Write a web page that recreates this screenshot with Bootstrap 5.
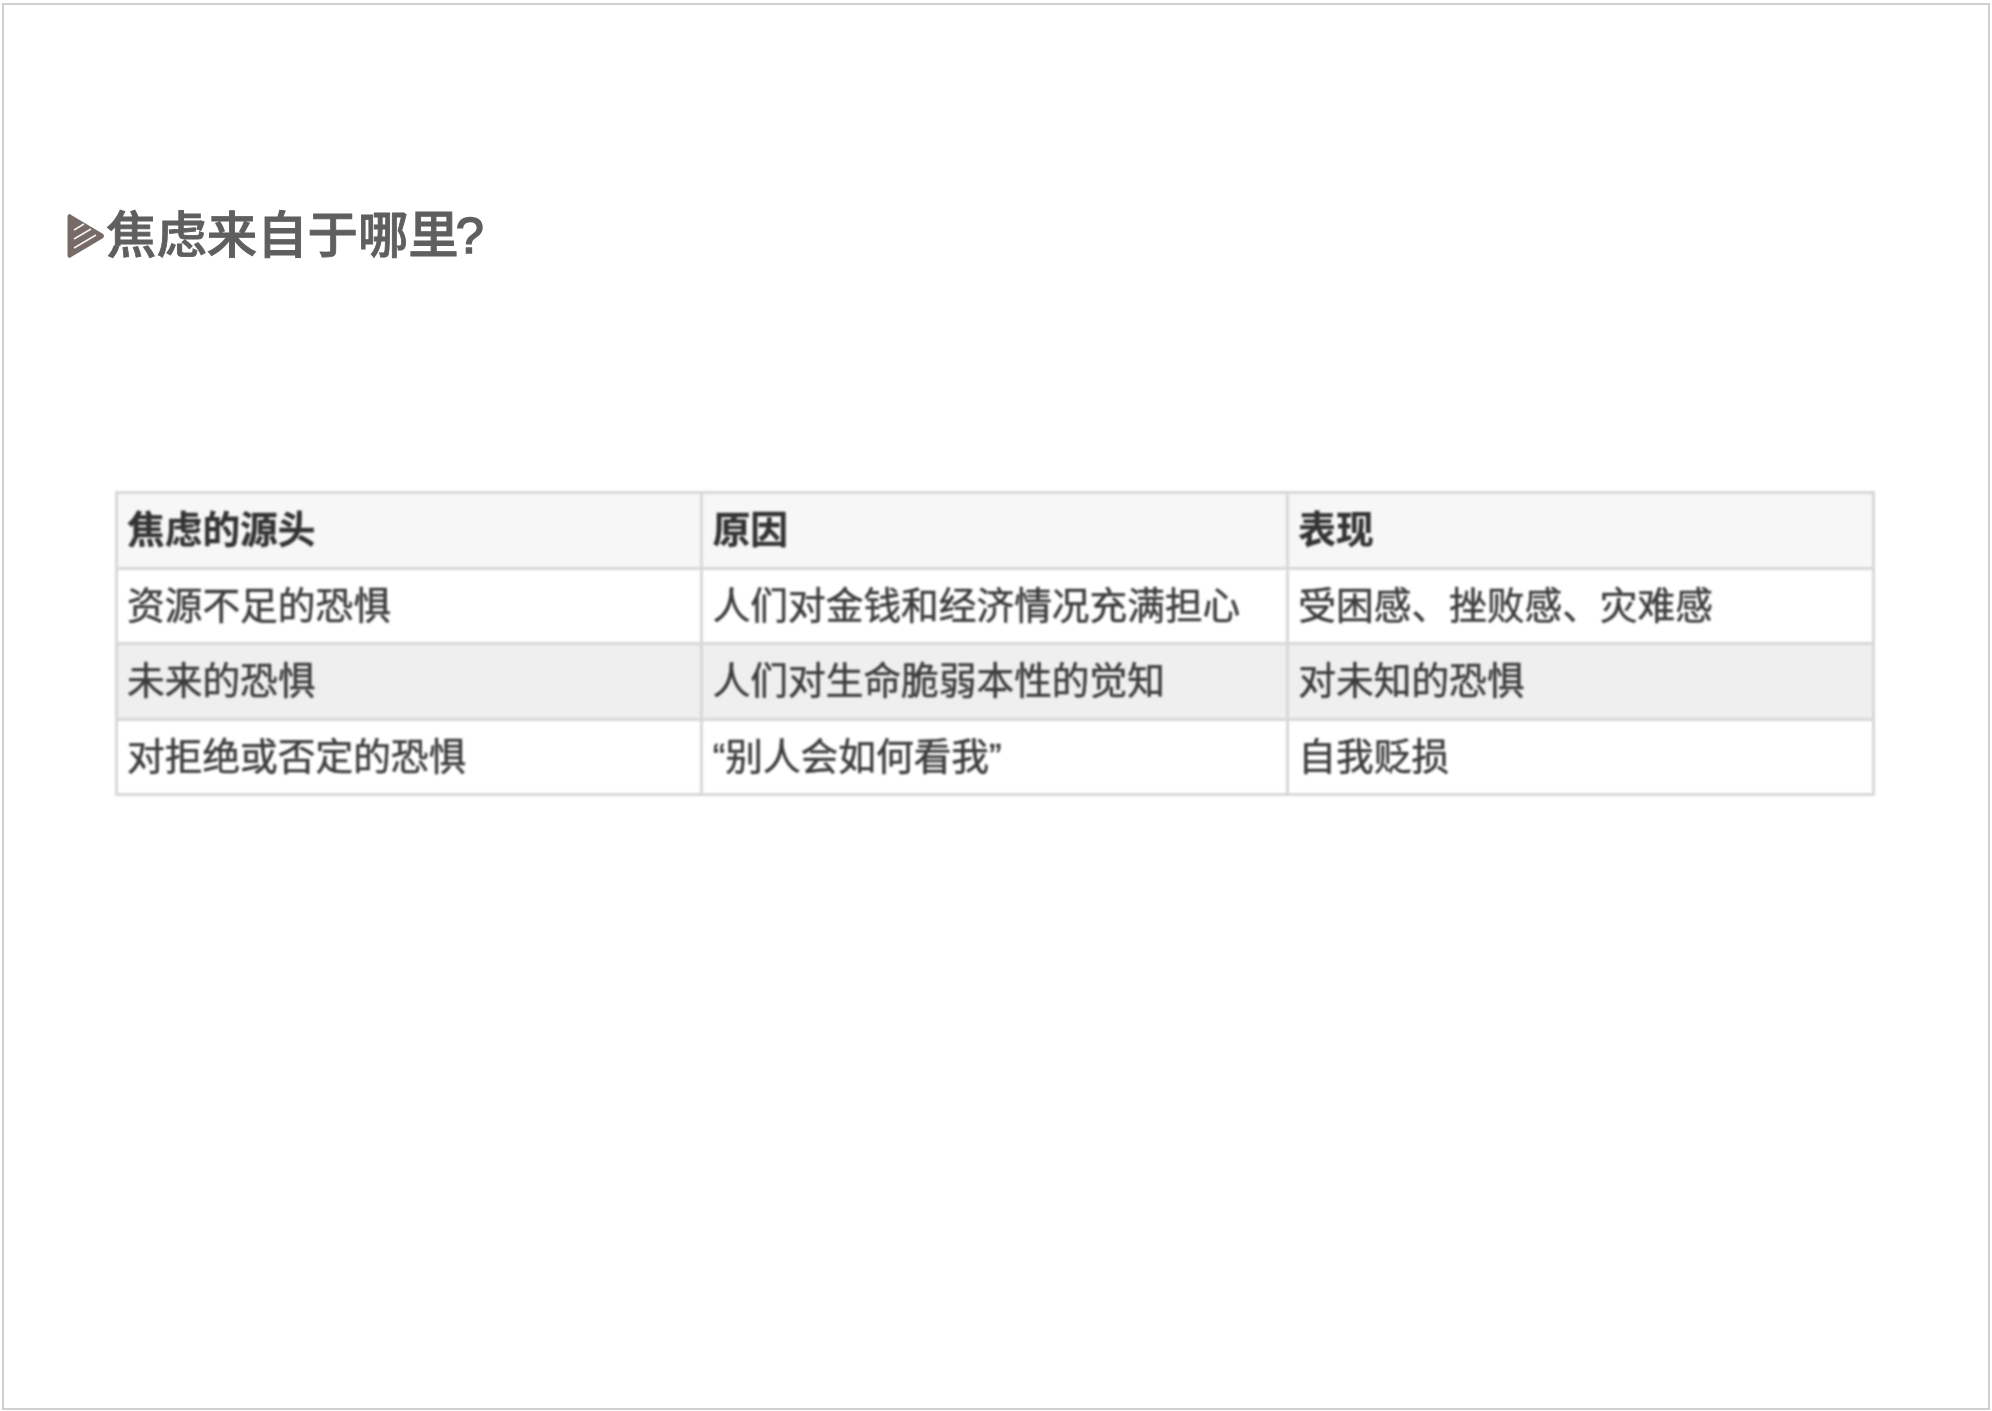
<!DOCTYPE html>
<html lang="zh-CN">
<head>
<meta charset="utf-8">
<title>焦虑来自于哪里?</title>
<link href="https://cdn.jsdelivr.net/npm/bootstrap@5.3.0/dist/css/bootstrap.min.css" rel="stylesheet">
<style>
html,body{background:#fff;margin:0;height:100%}
body{font-family:"Liberation Sans","Noto Sans CJK SC",sans-serif;overflow:hidden}
.frame-box{margin:3px 2px 2px 2px;height:1407px;border:2px solid #cfcfcf;background:#fff;padding-top:202px}
.slide-title{margin:0 0 0 62px;font-size:50.4px;line-height:58px;font-weight:500;color:#5f5f5f;gap:1px;filter:blur(.5px);-webkit-text-stroke:.9px #5f5f5f}
.slide-title svg{width:39px;height:46px;flex:none}
.title-mark{margin-left:-3px;-webkit-text-stroke:1.6px #5f5f5f}
.sheet-wrap{margin:226px 0 0 110.5px;width:1760px;filter:blur(.8px)}
.sheet{table-layout:fixed;width:1760px;margin:0;border-collapse:collapse;font-size:37.7px;line-height:44px;color:#3c3c3c;--bs-table-bg:transparent}
.sheet th,.sheet td{border:3px solid #d8d8d8;padding:14px 0 14px 9.5px;height:75.5px;white-space:nowrap;vertical-align:top;font-weight:400;color:#3c3c3c;box-shadow:none;-webkit-text-stroke:.5px #3c3c3c}
.sheet thead th{background:#f7f7f7;font-weight:700;color:#333;-webkit-text-stroke:.3px #333}
.sheet tr.shade td{background:#efefef}
</style>
</head>
<body>
<div class="frame-box">
  <h1 class="slide-title d-flex align-items-center">
    <svg viewBox="0 0 39 46" aria-hidden="true">
      <path d="M4 3 L36 22 Q37 23 36 24 L4 43 Q3 44 3 42 L3 4 Q3 2 4 3 Z" fill="#766b67" stroke="#766b67" stroke-width="3" stroke-linejoin="round"/>
      <path d="M8 17 L18 11 M8 26 L25 16 M8 35 L30 22" stroke="#f4f2f1" stroke-width="1.6" fill="none"/>
    </svg>
    <span>焦虑来自于哪里<span class="title-mark">?</span></span>
  </h1>
  <div class="sheet-wrap">
    <table class="table table-bordered sheet">
      <thead>
        <tr><th>焦虑的源头</th><th>原因</th><th>表现</th></tr>
      </thead>
      <tbody>
        <tr><td>资源不足的恐惧</td><td>人们对金钱和经济情况充满担心</td><td>受困感、挫败感、灾难感</td></tr>
        <tr class="shade"><td>未来的恐惧</td><td>人们对生命脆弱本性的觉知</td><td>对未知的恐惧</td></tr>
        <tr><td>对拒绝或否定的恐惧</td><td>“别人会如何看我”</td><td>自我贬损</td></tr>
      </tbody>
    </table>
  </div>
</div>
<script src="https://cdn.jsdelivr.net/npm/bootstrap@5.3.0/dist/js/bootstrap.bundle.min.js"></script>
</body>
</html>
